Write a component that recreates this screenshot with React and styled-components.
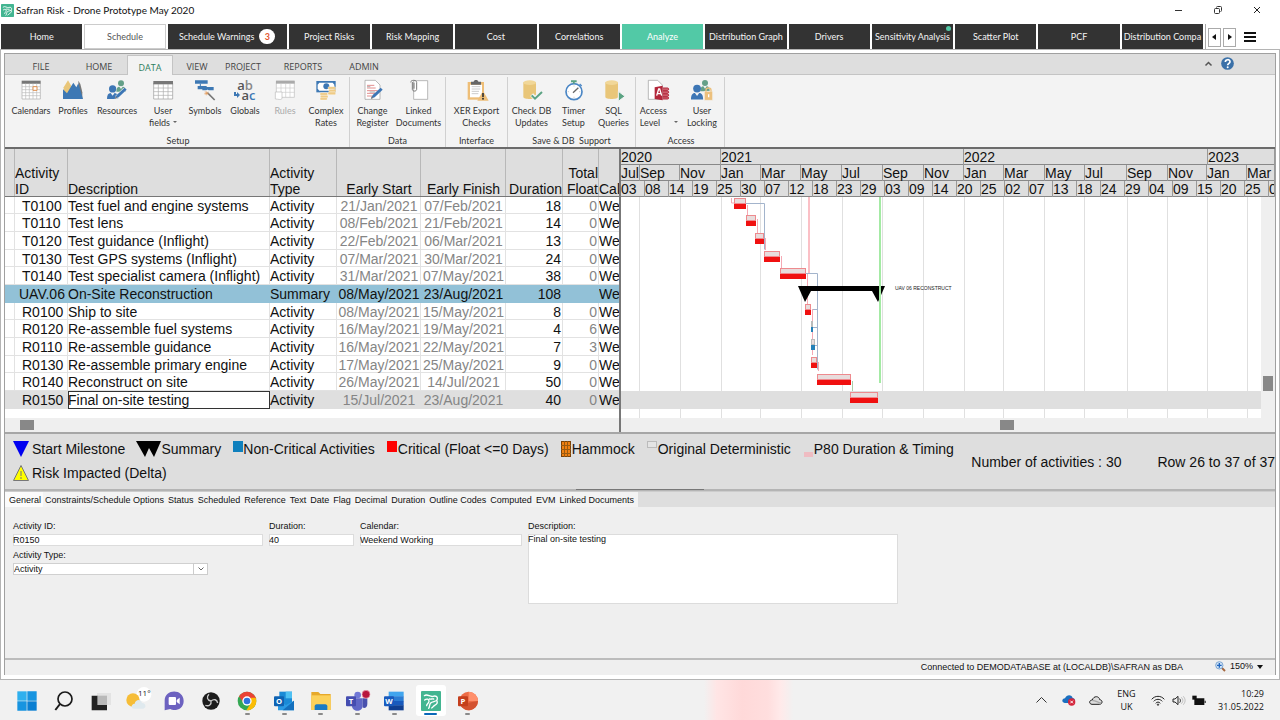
import React from "react";
import styled, { createGlobalStyle, css } from "styled-components";

const UI = `"Open Sans", "Noto Sans", sans-serif`;
const LABEL = `Lato, "Open Sans", sans-serif`;
const ARIAL = `"Liberation Sans", Arial, sans-serif`;

const Global = createGlobalStyle`
  *, *::before, *::after { box-sizing: border-box; }
  body { margin: 0; background: #fff; color: #111; font-family: ${ARIAL}; }
  button, input, select, textarea { font: inherit; color: inherit; margin: 0; padding: 0; border: 0; border-radius: 0; background: none; }
  button { white-space: nowrap; }
  svg { display: block; flex: none; overflow: visible; }
`;

const Screen = styled.div`
  display: flex;
  flex-direction: column;
  min-height: 100vh;
  overflow: hidden;
`;

/* ---------- title bar ---------- */
const TitleBar = styled.header`
  display: flex;
  align-items: center;
  gap: 2px;
  height: 24px;
  padding: 0 16px 4px 1px;
  font-family: ${LABEL};
`;
const Title = styled.h1`
  flex: 1;
  margin: 0;
  font-size: 10px;
  font-weight: 400;
  line-height: 16px;
`;
const WindowButton = styled.button`
  display: grid;
  place-items: center;
  width: 14px;
  height: 16px;
  margin-left: 23px;
`;

/* ---------- module tabs ---------- */
const ModuleBar = styled.nav`
  display: flex;
  height: 25px;
  padding-left: 1px;
  font-family: ${LABEL};
  font-size: 9px;
`;
const ModuleTabs = styled.div`
  display: flex;
  flex: 1;
  gap: 2px;
  min-width: 0;
`;
const tabTone = {
  dark: css`background: #333; color: #f4f4f4;`,
  open: css`background: #fff; color: #555; box-shadow: inset 0 0 0 1px #ccc;`,
  green: css`background: #52c9a6; color: #fff;`,
};
const ModuleTab = styled.button`
  position: relative;
  display: flex;
  align-items: center;
  justify-content: center;
  gap: 5px;
  flex: ${(p) => (p.$wide ? "0 0 119px" : "1 1 0")};
  min-width: 0;
  overflow: hidden;
  ${(p) => tabTone[p.$tone]}
`;
const CountBadge = styled.span`
  width: 16px;
  height: 15px;
  border-radius: 8px;
  background: #fff;
  color: #e4572e;
  font-weight: 700;
  line-height: 15px;
`;
const NewDot = styled.span`
  position: absolute;
  top: 2px;
  right: 2px;
  width: 5px;
  height: 5px;
  border-radius: 50%;
  background: #52c9a6;
`;
const ModuleTools = styled.div`
  display: flex;
  align-items: center;
  gap: 2px;
  width: 75px;
  padding: 1px 0 0 2px;
  margin-left: 2px;
  border-left: 1px solid #aaa;
`;
const ScrollButton = styled.button`
  display: grid;
  place-items: center;
  width: 13px;
  height: 19px;
  border: 1px solid #aaa;
`;
const MenuButton = styled.button`
  margin-left: 6px;
`;

/* ---------- application frame ---------- */
const Frame = styled.main`
  display: flex;
  flex: 1;
  flex-direction: column;
  padding: 3px 3px 4px;
  border: 1px solid #b4b4b4;
`;
const FrameInner = styled.div`
  display: flex;
  flex: 1;
  flex-direction: column;
  min-width: 0;
  border: 1px solid #a0a0a0;
  border-bottom: 0;
  background: #efefef;
`;

/* ---------- ribbon ---------- */
const RibbonTabs = styled.div`
  display: flex;
  align-items: stretch;
  height: 21px;
  padding: 1px 41px 0 6px;
  border-bottom: 1px solid #c4c4c4;
  background: #dedede;
  font-family: ${UI};
  font-size: 9px;
`;
const RibbonTab = styled.button`
  width: ${(p) => p.$w}px;
  padding-top: 4px;
  color: #444;
  ${(p) =>
    p.$active &&
    css`
      margin-bottom: -1px;
      border: 1px solid #c4c4c4;
      border-bottom: 0;
      background: #f3f3f3;
      color: #2d7d5d;
    `}
`;
const RibbonCorner = styled.div`
  display: flex;
  align-items: center;
  gap: 9px;
  margin-left: auto;
  padding-bottom: 2px;
`;
const Ribbon = styled.div`
  display: flex;
  height: 74px;
  border-bottom: 2px solid #6b6b6b;
  background: #f3f3f3;
  color: #333;
  font-family: ${LABEL};
  font-size: 9px;
`;
const RibbonGroup = styled.section`
  display: flex;
  flex-direction: column;
  justify-content: space-between;
  width: ${(p) => p.$w}px;
  margin: 2px 0 0;
  padding-left: ${(p) => p.$pad ?? 0}px;
  border-right: 1px solid #d0d0d0;
`;
const GroupButtons = styled.div`
  display: flex;
  justify-content: center;
`;
const GroupLabel = styled.div`
  line-height: 12px;
  text-align: center;
  white-space: pre;
`;
const Tool = styled.button`
  display: flex;
  flex-direction: column;
  align-items: center;
  gap: 5px;
  width: ${(p) => p.$w}px;
  padding-top: 3px;
  line-height: 12px;
  color: ${(p) => (p.$off ? "#aaa" : "inherit")};
`;
const ToolLabel = styled.span`
  white-space: pre;
  text-align: ${(p) => (p.$left ? "left" : "center")};
`;
const Caret = styled.span`
  display: inline-block;
  margin: 0 0 3px ${(p) => (p.$far ? 14 : 3)}px;
  border: 2px solid transparent;
  border-top-color: #666;
  border-bottom: 0;
`;

/* ---------- activity grid ---------- */
const Workspace = styled.div`
  display: flex;
  height: 285px;
  border-bottom: 2px solid #a6a6a6;
  background: #fff;
`;
const GridPane = styled.div`
  display: flex;
  flex-direction: column;
  width: 616px;
  overflow: hidden;
  border-right: 2px solid #777;
`;
const Grid = styled.table`
  width: 615px;
  table-layout: fixed;
  border-collapse: separate;
  border-spacing: 0;
  font-size: 14px;
  line-height: 16px;
`;
const HeadRow = styled.tr`
  height: 48px;
  background: #dedede;
`;
const Th = styled.th`
  padding: 0 ${(p) => (p.$align === "right" ? 1 : 0)}px 0 0;
  box-shadow: inset 0 -1px #777, inset -1px 0 #b8b8b8;
  font-weight: 400;
  text-align: ${(p) => p.$align};
  vertical-align: bottom;
  white-space: pre;
  overflow: hidden;
`;
const rowTone = { plain: "#fff", summary: "#92c1d7", selected: "#dfdfdf" };
const BodyRow = styled.tr`
  height: 18px;
  background: ${(p) => rowTone[p.$tone]};
  &:nth-child(3n + 1) {
    height: 17px;
  }
`;
const Td = styled.td`
  padding: 0 ${(p) => (p.$align === "right" ? 2 : 0)}px 0 ${(p) => p.$indent ?? 0}px;
  color: ${(p) => (p.$dim ? "#858585" : "#111")};
  text-align: ${(p) => p.$align};
  white-space: nowrap;
  overflow: hidden;
  box-shadow: ${(p) => (p.$tone === "plain" ? "inset -1px -1px #e2e2e2" : "none")};
  ${(p) => p.$focus && css`background: #fff; box-shadow: inset 0 0 0 1px #333;`}
`;
const HScroll = styled.div`
  height: 14px;
  margin-top: auto;
  padding: 2px 0 0 ${(p) => p.$at};
  background: #efefef;
`;
const HThumb = styled.div`
  width: 14px;
  height: 10px;
  background: #888;
`;

/* ---------- time chart ---------- */
const ChartPane = styled.div`
  display: flex;
  flex: 1;
  flex-direction: column;
  min-width: 0;
`;
const ScaleRow = styled.div`
  display: flex;
  height: 16px;
  overflow: hidden;
  background: #dedede;
  box-shadow: inset 0 -1px #888;
  font-size: 14px;
  line-height: 16px;
`;
const ScaleCell = styled.div`
  flex: ${(p) => (p.$w ? `0 0 ${p.$w}px` : "1 0 0")};
  border-right: 1px solid #999;
  overflow: ${(p) => (p.$w ? "visible" : "hidden")};
`;
const ChartBody = styled.div`
  display: flex;
  flex: 1;
  min-height: 0;
`;
const Chart = styled.svg`
  flex: 1;
  min-width: 0;
  height: 100%;
`;
const VScroll = styled.div`
  width: 14px;
  padding: 179px 2px 0;
  background: #efefef;
`;
const VThumb = styled.div`
  height: 15px;
  background: #888;
`;

/* ---------- legend ---------- */
const Legend = styled.section`
  display: flex;
  height: 55px;
  background: #dedede;
  font-size: 14px;
  line-height: 24px;
`;
const LegendItems = styled.ul`
  display: flex;
  flex: 1;
  flex-wrap: wrap;
  align-content: flex-start;
  column-gap: 12px;
  margin: 0;
  padding: 3px 0 0 8px;
  list-style: none;
`;
const LegendItem = styled.li`
  display: flex;
  align-items: center;
  gap: ${(p) => p.$gap}px;
  white-space: nowrap;
`;
const Totals = styled.div`
  display: flex;
  align-items: center;
  gap: 36px;
  white-space: nowrap;
`;
const Splitter = styled.div`
  display: flex;
  justify-content: center;
  height: 3px;
  border-top: 2px solid #b4b4b4;
  background: #ccc;
  &::before {
    content: "";
    width: 128px;
    height: 1px;
    margin-top: -2px;
    background: #777;
  }
`;

/* ---------- detail form ---------- */
const FormTabs = styled.div`
  display: flex;
  height: 15px;
  background: #dedede;
  font-size: 9px;
`;
const FormTab = styled.button`
  padding: 0 2px;
  background: ${(p) => (p.$active ? "#fbfbfb" : "#f3f3f3")};
  &:first-child {
    padding-left: 4px;
  }
  &:last-child {
    padding-right: 4px;
  }
`;
const Form = styled.form`
  display: grid;
  flex: 1;
  grid-template-columns: 250px 85px 162px 370px;
  grid-template-rows: 25px 1fr;
  gap: 4px 6px;
  min-height: 151px;
  padding: 14px 8px 0;
  border-bottom: 2px solid #bcbcbc;
  font-size: 9px;
  line-height: 11px;
`;
const Field = styled.div`
  display: flex;
  flex-direction: column;
  gap: 2px;
  ${(p) => p.$tall && css`grid-row: span 2;`}
`;
const TextInput = styled.input`
  height: 12px;
  box-shadow: inset 0 0 0 1px #dcdcdc;
  background: #fff;
`;
const TextArea = styled.textarea`
  height: 70px;
  box-shadow: inset 0 0 0 1px #dcdcdc;
  background: #fff;
  resize: none;
`;
const SelectWrap = styled.div`
  position: relative;
  width: 195px;
`;
const Select = styled.select`
  display: block;
  width: 100%;
  height: 12px;
  border: 1px solid #d0d0d0;
  background: #fff;
  appearance: none;
`;
const SelectArrow = styled.span`
  position: absolute;
  top: 0;
  right: 0;
  display: grid;
  place-items: center;
  width: 15px;
  height: 12px;
  border: 1px solid #ccc;
  pointer-events: none;
`;

/* ---------- status bar ---------- */
const StatusBar = styled.footer`
  display: flex;
  align-items: center;
  justify-content: flex-end;
  height: 15px;
  padding-right: 12px;
  font-size: 9px;
  line-height: 15px;
`;
const Zoom = styled.button`
  display: flex;
  align-items: center;
  gap: 4px;
  height: 13px;
  margin-left: 32px;
  padding-bottom: 2px;
`;

/* ---------- taskbar ---------- */
const Taskbar = styled.nav`
  display: flex;
  justify-content: space-between;
  height: 40px;
  padding: 0 16px 0 9px;
  background: linear-gradient(90deg, transparent 55%, #ffe5e5 56%, #ffd9d9 58%, #ffdede 60%, #ffeaea 61%, transparent 62%) #f1f1f1;
  font-family: ${UI};
`;
const Apps = styled.div`
  display: grid;
  grid-template-columns: repeat(13, 1fr);
  width: 477px;
`;
const AppButton = styled.button`
  position: relative;
  display: grid;
  place-items: center;
  height: 31px;
  margin: 5px 3px 0;
  border-radius: 3px;
  background: ${(p) => (p.$active ? "#fff" : "none")};
  &::after {
    content: "";
    position: absolute;
    bottom: 1px;
    width: ${(p) => (p.$active ? 13 : 5)}px;
    height: 2px;
    border-radius: 1px;
    background: ${(p) => (p.$active ? "#0a67b8" : p.$running ? "#8a8a8a" : "none")};
  }
`;
const Tray = styled.div`
  display: flex;
  align-items: center;
  font-size: 9px;
  line-height: 13px;
`;
const TrayButton = styled.button`
  display: grid;
  place-items: center;
  width: ${(p) => p.$w}px;
  height: 30px;
  white-space: pre;
`;
const Clock = styled.time`
  width: 52px;
  text-align: right;
  white-space: nowrap;
`;

/* ---------- icons ---------- */
const SafranMark = ({ size }) => (
  <svg width={size} height={size} viewBox="0 0 60 60">
    <rect width="60" height="60" rx="3" fill="#43b591" />
    <g fill="none" stroke="#fff" strokeWidth="4" strokeLinecap="round" strokeLinejoin="round">
      <path d="M10 14c9-7 17 5 26 2 8-3 14 1 13 8-1 9-14 6-20 12-5 5-2 12-6 16" />
      <path d="M11 27c6-5 13-3 13 4 0 6-7 7-7 13" />
      <path d="M32 51c4-2 5-6 9-8 6-3 9-8 7-13" />
      <path d="M25 24c5 1 9-1 13 0" />
    </g>
  </svg>
);

const Ico = ({ children }) => (
  <svg width="20" height="20" viewBox="0 0 60 60">
    {children}
  </svg>
);
const Doc = ({ x = 4, w = 44 }) => (
  <path d={`M${x} 1h${w - 14}l14 14v43h-${w}z`} fill="#fff" stroke="#999" strokeWidth="2" />
);
const Pen = ({ color = "#3d76b5" }) => (
  <g>
    <path d="M24 56l5-11 24-22 6 6-24 23z" fill={color} />
    <path d="M24 56l2-7 5 5z" fill="#777" />
  </g>
);
const Person = ({ x, y, color, s = 1 }) => (
  <g transform={`translate(${x} ${y}) scale(${s})`} fill={color}>
    <circle cx="14" cy="9" r="9" />
    <path d="M0 34c0-10 3-15 9-15l5 7 5-7c6 0 9 5 9 15z" />
  </g>
);
const Db = () => (
  <g>
    <path d="M4 7v44c0 8 38 8 38 0V7z" fill="#e9c679" />
    <ellipse cx="23" cy="8" rx="19" ry="7" fill="#f1d798" />
  </g>
);

const icons = {
  calendars: (
    <Ico>
      <path d="M3 10h55v47H3z" fill="#fff" stroke="#aaa" strokeWidth="2" />
      <path d="M2 2h57v9H2z" fill="#777" />
      <path d="M14 11v46M25 11v46M36 11v46M47 11v46M3 20h55M3 29h55M3 38h55M3 47h55" stroke="#bbb" strokeWidth="2" />
      <path d="M36 20h12v11H36z" fill="#fff" stroke="#e0904f" strokeWidth="3" />
    </Ico>
  ),
  profiles: (
    <Ico>
      <path d="M2 22L15 1l14 24-6 22H2z" fill="#e9c679" />
      <path d="M46 2l6 10 6 25v20H48z" fill="#777" />
      <path d="M0 28l12 12L31 8l9 14 6-12 14 47H0z" fill="#3d78b4" />
    </Ico>
  ),
  resources: (
    <Ico>
      <Person x={28} y={1} color="#64a088" />
      <Person x={0} y={16} color="#3d76b5" s={1.2} />
      <path d="M22 60l5-14 22-22 10 6-22 24z" fill="#f3f3f3" />
      <Pen />
    </Ico>
  ),
  fields: (
    <Ico>
      <path d="M2 10h57v47H2z" fill="#fff" stroke="#999" strokeWidth="2" />
      <path d="M1 3h59v10H1z" fill="#777" />
      <path d="M16 12v45M31 12v45M45 12v45M2 24h57M2 35h57M2 46h57" stroke="#aaa" strokeWidth="2" />
    </Ico>
  ),
  symbols: (
    <Ico>
      <path d="M0 1h38v10H0zM8 18h27v10H8zM22 21h34v10H22z" fill="#3d78b4" />
      <path d="M16 11v8" stroke="#3d78b4" strokeWidth="3" />
      <path d="M34 32l28 28" stroke="#f3f3f3" strokeWidth="10" />
      <path d="M37 38l22 22" stroke="#777" strokeWidth="5" />
      <path d="M34 34v12M28 40h13M30 34l9 10M39 35l-9 9" stroke="#e69b5a" strokeWidth="2" />
    </Ico>
  ),
  rules: (
    <Ico>
      <path d="M4 4h54v48H4z" fill="#fff" stroke="#bbb" strokeWidth="2" />
      <path d="M3 2h56v9H3z" fill="#aaa" />
      <path d="M18 12v40M32 12v40M45 12v40M4 24h54M4 37h54" stroke="#ccc" strokeWidth="2" />
      <path d="M1 36h20v20c-5 5-11 1-20 1z" fill="#fff" stroke="#bbb" strokeWidth="2" />
    </Ico>
  ),
  rates: (
    <Ico>
      <path d="M1 3h58v34H1z" fill="#3d78b4" />
      <path d="M10 8h40l5 6v12l-5 6H10l-5-6V14z" fill="#fff" />
      <circle cx="31" cy="19" r="9" fill="#3d78b4" />
      <g fill="#efcb85" stroke="#fff" strokeWidth="1">
        <rect x="36" y="20" width="23" height="8" rx="3" />
        <rect x="38" y="28" width="22" height="8" rx="3" />
        <rect x="12" y="38" width="23" height="8" rx="3" />
        <rect x="36" y="36" width="23" height="8" rx="3" />
        <rect x="13" y="46" width="23" height="8" rx="3" />
        <rect x="12" y="53" width="22" height="7" rx="3" />
      </g>
    </Ico>
  ),
  change: (
    <Ico>
      <Doc x={6} w={45} />
      <path d="M12 16h22M12 24h26M12 32h32M12 40h24M12 48h16" stroke="#e28f8f" strokeWidth="3" />
      <path d="M12 20h10M20 36h16" stroke="#888" strokeWidth="2" />
      <Pen />
    </Ico>
  ),
  linked: (
    <Ico>
      <path d="M14 2h42v56H14z" fill="#fff" stroke="#999" strokeWidth="2" />
      <path d="M10 6v22c0 7 13 7 13 0V7c0-8-18-8-18 0" fill="none" stroke="#777" strokeWidth="3" />
      <path d="M15 8v18" stroke="#777" strokeWidth="3" />
    </Ico>
  ),
  xer: (
    <Ico>
      <path d="M2 6h49v53H2z" fill="#eebe77" />
      <path d="M9 14h36v38H9z" fill="#fff" />
      <path d="M14 20h26M14 27h26M14 34h22M14 41h20" stroke="#ccc" strokeWidth="3" />
      <path d="M12 14V5h8c0-7 14-7 14 0h8v9z" fill="#666" />
      <path d="M48 32l17 30H31z" fill="#eebe77" />
      <path d="M48 39v12" stroke="#333" strokeWidth="5" />
      <circle cx="48" cy="56" r="3" fill="#333" />
    </Ico>
  ),
  check: (
    <Ico>
      <Db />
      <path d="M29 44l10 11 22-20" fill="none" stroke="#f3f3f3" strokeWidth="12" />
      <path d="M29 46l10 10 21-20" fill="none" stroke="#5ba383" strokeWidth="6" />
    </Ico>
  ),
  timer: (
    <Ico>
      <circle cx="30" cy="35" r="24" fill="#fff" stroke="#4a86c5" strokeWidth="5" />
      <path d="M21 1h17v6h-6v4h-5V7h-6z" fill="#5ba383" />
      <path d="M47 12l6 6" stroke="#4a86c5" strokeWidth="4" />
      <path d="M27 38l16-15" stroke="#666" strokeWidth="4" />
      <path d="M30 16v4M30 50v4M11 35h4M45 35h4" stroke="#bbb" strokeWidth="2" />
    </Ico>
  ),
  sql: (
    <Ico>
      <Db />
      <path d="M43 34l20 15-20 15z" fill="#5ba383" stroke="#f3f3f3" strokeWidth="3" />
    </Ico>
  ),
  access: (
    <svg width="22" height="20" viewBox="0 0 66 60">
      <Doc x={1} w={42} />
      <path d="M20 22l24-5v44l-24-4z" fill="#b3263a" />
      <path d="M26 47l6-20h3l6 20M29 41h9" fill="none" stroke="#fff" strokeWidth="4" />
      <path d="M45 24h14c4 0 4 7 0 7H45M45 33h14c4 0 4 7 0 7H45M45 42h14c4 0 4 7 0 7H45M45 51h14c4 0 4 6 0 6H45" fill="#d26a76" stroke="#b3263a" strokeWidth="3" />
    </svg>
  ),
  locking: (
    <svg width="22" height="20" viewBox="0 0 66 60">
      <Person x={28} y={0} color="#64a088" />
      <Person x={0} y={14} color="#3d76b5" s={1.3} />
      <path d="M40 34h25v27H40z" fill="#ecc07d" stroke="#f3f3f3" strokeWidth="2" />
      <path d="M45 35v-5c0-8 15-8 15 0v5" fill="none" stroke="#ecc07d" strokeWidth="4" />
      <path d="M53 43v9" stroke="#fff" strokeWidth="4" />
    </svg>
  ),
};

const GlobalsIcon = styled.span`
  display: flex;
  flex-direction: column;
  height: 20px;
  color: #555;
  font-family: ${UI};
  font-size: 13px;
  font-weight: 600;
  line-height: 10px;
  b { color: #3d78b4; font-weight: 600; }
  i { color: #888; font-style: normal; }
`;
const SecondLine = styled.span`
  display: flex;
  align-items: center;
  gap: 1px;
`;

const Tri = ({ dir }) => (
  <svg width="5" height="6" viewBox="0 0 5 6">
    <path d={dir === "left" ? "M4 0v6L0 3z" : "M1 0v6l4-3z"} fill="#111" />
  </svg>
);

const officeTile = (letter, dark) => (
  <g>
    <rect x="0" y="16" width="30" height="30" rx="3" fill={dark} />
    <text x="15" y="39" fontSize="23" fontWeight="700" fill="#fff" textAnchor="middle" fontFamily="Open Sans">{letter}</text>
  </g>
);
const A = ({ children, w = 20, vb = "0 0 60 60" }) => (
  <svg width={w} height="20" viewBox={vb}>{children}</svg>
);
const apps = [
  ["Start", 0, <A><g fill="#1794e0"><path d="M1 1h28v28H1z" fill="#2fb0ee" /><path d="M31 1h28v28H31zM1 31h28v28H1z" /><path d="M31 31h28v28H31z" fill="#0a7fd2" /></g></A>],
  ["Search", 0, <A><circle cx="33" cy="24" r="21" fill="none" stroke="#1a1a1a" strokeWidth="5" /><path d="M18 39L4 57" stroke="#1a1a1a" strokeWidth="6" /></A>],
  ["Task view", 0, <A><path d="M18 6h42v36H18z" fill="#e3e3e3" /><path d="M2 14h18v28h28v16H2z" fill="#222" /><path d="M20 14h28v28H20z" fill="#b9b9b9" /></A>],
  ["Weather", 0, <A w={28} vb="0 0 84 60"><circle cx="63" cy="10" r="22" fill="#fff" /><circle cx="30" cy="27" r="20" fill="#f6bd37" /><path d="M34 53c-10 0-11-14 1-15 3-14 19-14 22-2 13-1 14 17 2 17z" fill="#dfe9ee" /><text x="64" y="16" fontSize="24" textAnchor="middle" fill="#222" fontFamily="Open Sans">11°</text></A>],
  ["Chat", 0, <A><path d="M2 58V28C3-8 59-8 59 30c0 26-28 32-40 24z" fill="#6d62c0" /><rect x="14" y="18" width="22" height="24" rx="3" fill="#fff" /><path d="M38 27l9-7v20l-9-7z" fill="#fff" /></A>],
  ["OBS", 0, <A><circle cx="30" cy="30" r="26" fill="#1c1c1c" /><path d="M30 30c-12-2-14-12-6-20M30 30c9-8 18-4 20 6M30 30c2 11-6 17-17 13" fill="none" stroke="#c9c9c9" strokeWidth="4" /></A>],
  ["Chrome", 1, <A><circle cx="30" cy="30" r="28" fill="#34a853" /><path d="M6 16A28 28 0 0 1 54 16L58 24H30L19 35z" fill="#ea4335" /><path d="M56 20A28 28 0 0 1 28 58L42 35V20z" fill="#fbbc05" /><circle cx="30" cy="30" r="14" fill="#fff" /><circle cx="30" cy="30" r="10" fill="#2f73dd" /></A>],
  ["Outlook", 1, <A><path d="M16 2h38v40H16z" fill="#1a8ad6" /><path d="M35 2h19v20H35z" fill="#4ec0f2" /><path d="M12 30l24 12 24-13v29H12z" fill="#2b9be5" /><path d="M60 29v29H26z" fill="#1470bd" />{officeTile("O", "#0f63b3")}</A>],
  ["Explorer", 1, <A><path d="M1 3h21l6 6h31v48H1z" fill="#e7a92a" /><path d="M1 13h58v44H1z" fill="#fcd15a" /><path d="M11 57V46c0-4 3-6 6-6h26c4 0 6 3 6 6v11z" fill="#1b7bc4" /></A>],
  ["Teams", 1, <A w={24} vb="0 0 72 60"><circle cx="35" cy="12" r="10" fill="#7178d6" /><path d="M18 22h32v22c0 20-32 20-32 0z" fill="#6067c6" /><path d="M50 22h14v17c0 12-10 14-14 10z" fill="#4951ad" />{officeTile("T", "#454db0")}<circle cx="60" cy="10" r="12" fill="#b8163d" stroke="#eea4b5" strokeWidth="2" /></A>],
  ["Word", 1, <A><path d="M14 2h45v15H14z" fill="#41a5ee" /><path d="M14 16h45v15H14z" fill="#2b7cd3" /><path d="M14 30h45v14H14z" fill="#185abd" /><path d="M14 43h45v15H14z" fill="#103f91" />{officeTile("W", "#185abd")}</A>],
  ["Safran Risk", 2, <SafranMark size={20} />],
  ["PowerPoint", 1, <A><circle cx="32" cy="30" r="28" fill="#ed6c47" /><path d="M32 2a28 28 0 0 1 28 28H32z" fill="#ff8f6b" /><path d="M60 30a28 28 0 0 1-54 10z" fill="#d35230" />{officeTile("P", "#c43e1c")}</A>],
];

/* ---------- data ---------- */
const modules = [
  ["Home", "dark"], ["Schedule", "open"], ["Schedule Warnings", "dark", "3"], ["Project Risks", "dark"],
  ["Risk Mapping", "dark"], ["Cost", "dark"], ["Correlations", "dark"], ["Analyze", "green"],
  ["Distribution Graph", "dark"], ["Drivers", "dark"], ["Sensitivity Analysis", "dark", "dot"],
  ["Scatter Plot", "dark"], ["PCF", "dark"], ["Distribution Compa", "dark"],
];
const ribbonTabs = [["FILE", 60], ["HOME", 56], ["DATA", 46], ["VIEW", 48], ["PROJECT", 44], ["REPORTS", 76], ["ADMIN", 46]];
const groups = [
  ["Setup", 345, [
    ["calendars", 44, "Calendars"], ["profiles", 40, "Profiles"], ["resources", 48, "Resources"],
    ["fields", 44, "User", "fields"], ["symbols", 40, "Symbols"], ["globals", 40, "Globals"],
    ["rules", 40, "Rules"], ["rates", 42, "Complex", "Rates"],
  ], 2],
  ["Data", 96, [["change", 42, "Change", "Register"], ["linked", 50, "Linked", "Documents"]]],
  ["Interface", 62, [["xer", 50, "XER Export", "Checks"]]],
  ["Save & DB  Support", 128, [["check", 42, "Check DB", "Updates"], ["timer", 42, "Timer", "Setup"], ["sql", 38, "SQL", "Queries"]]],
  ["Access", 89, [["access", 42, "Access", "Level"], ["locking", 44, "User", "Locking"]], 2],
];
const columns = [
  [10, "", "left"], [53, "Activity\nID", "left"], [202, "Description", "left"], [67, "Activity\nType", "left"],
  [84, "Early Start", "center"], [85, "Early Finish", "center"], [57, "Duration", "right"],
  [36, "Total\nFloat", "right"], [21, "Cal", "left"],
];
const rows = [
  ["T0100", "Test fuel and engine systems", "21/Jan/2021", "07/Feb/2021", 18, 0],
  ["T0110", "Test lens", "08/Feb/2021", "21/Feb/2021", 14, 0],
  ["T0120", "Test guidance (Inflight)", "22/Feb/2021", "06/Mar/2021", 13, 0],
  ["T0130", "Test GPS systems (Inflight)", "07/Mar/2021", "30/Mar/2021", 24, 0],
  ["T0140", "Test specialist camera (Inflight)", "31/Mar/2021", "07/May/2021", 38, 0],
  ["UAV.06", "On-Site Reconstruction", "08/May/2021", "23/Aug/2021", 108, ""],
  ["R0100", "Ship to site", "08/May/2021", "15/May/2021", 8, 0],
  ["R0120", "Re-assemble fuel systems", "16/May/2021", "19/May/2021", 4, 6],
  ["R0110", "Re-assemble guidance", "16/May/2021", "22/May/2021", 7, 3],
  ["R0130", "Re-assemble primary engine", "17/May/2021", "25/May/2021", 9, 0],
  ["R0140", "Reconstruct on site", "26/May/2021", "14/Jul/2021", 50, 0],
  ["R0150", "Final on-site testing", "15/Jul/2021", "23/Aug/2021", 40, 0],
];
const years = [[100, "2020"], [243, "2021"], [244, "2022"], [0, "2023"]];
const months = [
  [19, "Jul"], [40, "Sep"], [41, "Nov"], [40, "Jan"], [40, "Mar"], [41, "May"], [41, "Jul"], [41, "Sep"], [40, "Nov"],
  [40, "Jan"], [41, "Mar"], [40, "May"], [42, "Jul"], [41, "Sep"], [39, "Nov"], [40, "Jan"], [0, "Mar"],
];
const days = "03 08 14 19 25 30 07 12 18 23 29 03 09 14 20 25 02 07 13 18 24 29 04 09 15 20 25".split(" ");

/* bar: row, start, end, colour */
const bars = [
  [0, 113, 125], [1, 125, 135], [2, 134, 143], [3, 143, 159], [4, 159, 185],
  [6, 184, 190], [7, 190, 192, "#2480b8"], [8, 190, 194, "#2480b8"], [9, 190, 196], [10, 196, 230], [11, 229, 257],
];
const gridLines = [18, 59, 100, 139, 180, 221, 261, 302, 343, 382, 423, 463, 506, 546, 586, 626];
const rowTop = (i) => i * 18 - Math.floor((i + 2) / 3);

function Gantt() {
  return (
    <Chart role="img" aria-label="Activity bars">
      {gridLines.map((x) => <path key={x} d={`M${x + 0.5} 0v222`} stroke="#e0e0e0" />)}
      <rect x="0" y={rowTop(11)} width="100%" height="18" fill="#dfdfdf" />
      <path d="M125 6.500h18.500v46M185 76.500h11.500v96M191 112.500h5M192 130.500h4M194 148.500h2" fill="none" stroke="#a3b4cc" />
      <g fill="none" stroke="#f5a9b4">
        <path d="M126.500 8v10M136.500 22v14M144.500 41v12M160.500 59v12M186.500 77v30M191.500 112v46M197.500 165v9" />
        <path d="M110.500 1v5h3" />
      </g>
      <path d="M187 0h2v76h-2z" fill="#fbc0c6" />
      <path d="M231.500 184v10" stroke="#a8cfa8" />
      {bars.map(([i, x1, x2, c = "#f01010"]) => (
        <g key={i}>
          <rect x={x1 + 0.5} y={rowTop(i) + 1.5} width={x2 - x1 - 1} height="5" fill="#e8dcdc" stroke={c === "#f01010" ? "#ee8a8e" : "#bbb"} />
          <rect x={x1} y={rowTop(i) + 7} width={x2 - x1} height="5" fill={c} />
        </g>
      ))}
      <path d="M177 89h87l-7 16-6-11h-61l-6 11z" fill="#000" />
      <path d="M258 0h2v186h-2z" fill="#a4eaa4" />
      <text x="274" y="93" fontSize="5" fill="#222">UAV 06 RECONSTRUCT</text>
    </Chart>
  );
}

const legend = [
  ["Start Milestone", 3, <svg width="16" height="16"><path d="M0 0h16L8 16z" fill="#0000f0" /></svg>],
  ["Summary", 0, <svg width="24" height="16"><path d="M-1 0h25l-7 16-5-9-4 9z" fill="#000" /></svg>],
  ["Non-Critical Activities", 0, <svg width="10" height="16"><path d="M0 0h10v11H0z" fill="#0f80bd" /></svg>],
  ["Critical (Float <=0 Days)", 1, <svg width="10" height="16"><path d="M0 0h10v11H0z" fill="#f00" /></svg>],
  ["Hammock", 1, <svg width="10" height="16"><rect x=".5" y=".5" width="9" height="15" fill="#f08010" stroke="#7a4208" /><path d="M3.500 0v16M6.500 0v16M0 4.500h10M0 8.500h10M0 12.500h10" stroke="#9a5a10" /></svg>],
  ["Original Deterministic", 1, <svg width="10" height="16"><rect x=".5" y=".5" width="9" height="6" fill="#e4e4e4" stroke="#bbb" /></svg>],
  ["P80 Duration & Timing", 1, <svg width="10" height="16"><path d="M1 11h9v5H1z" fill="#efbcc2" /></svg>],
  ["Risk Impacted (Delta)", 3, <svg width="16" height="16"><path d="M8 .5L15.500 15.500H.5z" fill="#ff0" stroke="#777" /><path d="M8 6v5M8 12v2" stroke="#777" /></svg>],
];
const formTabs = ["General", "Constraints/Schedule Options", "Status", "Scheduled", "Reference", "Text", "Date", "Flag", "Decimal", "Duration", "Outline Codes", "Computed", "EVM", "Linked Documents"];

function ToolButton({ icon, width, first, second }) {
  const caret = icon === "fields" || icon === "access";
  return (
    <Tool $w={width} $off={icon === "rules"}>
      {icon === "globals" ? (
        <GlobalsIcon aria-hidden="true">
          <span>a<i>b</i></span>
          <SecondLine>
            <svg width="6" height="6"><path d="M1 0v3h3" fill="none" stroke="#3d78b4" strokeWidth="2" /><path d="M3 0l3 3-3 3z" fill="#3d78b4" /></svg>
            <span>a<b>c</b></span>
          </SecondLine>
        </GlobalsIcon>
      ) : icons[icon]}
      <ToolLabel $left={icon === "access"}>
        {first}
        {second && "\n" + second}
        {caret && <Caret $far={icon === "access"} />}
      </ToolLabel>
    </Tool>
  );
}

export default function App() {
  return (
    <Screen>
      <Global />
      <TitleBar>
        <SafranMark size={13} />
        <Title>Safran Risk - Drone Prototype May 2020</Title>
        <WindowButton aria-label="Minimize"><svg width="8" height="8"><path d="M0 4.500h7" stroke="#333" /></svg></WindowButton>
        <WindowButton aria-label="Restore"><svg width="8" height="8" fill="none" stroke="#333"><rect x=".5" y="2.500" width="5" height="5" rx="1" /><path d="M2.500 1.500q0-1 1-1h3q1 0 1 1v3q0 1-1 1" /></svg></WindowButton>
        <WindowButton aria-label="Close"><svg width="8" height="8"><path d="M1 1l6 6M7 1L1 7" stroke="#222" /></svg></WindowButton>
      </TitleBar>

      <ModuleBar>
        <ModuleTabs>
          {modules.map(([name, tone, extra]) => (
            <ModuleTab key={name} $tone={tone} $wide={extra === "3"}>
              {name}
              {extra === "3" && <CountBadge>3</CountBadge>}
              {extra === "dot" && <NewDot />}
            </ModuleTab>
          ))}
        </ModuleTabs>
        <ModuleTools>
          <ScrollButton aria-label="Scroll left"><Tri dir="left" /></ScrollButton>
          <ScrollButton aria-label="Scroll right"><Tri dir="right" /></ScrollButton>
          <MenuButton aria-label="Menu"><svg width="12" height="10"><path d="M0 1h12M0 5h12M0 9h12" stroke="#111" strokeWidth="2" /></svg></MenuButton>
        </ModuleTools>
      </ModuleBar>

      <Frame>
        <FrameInner>
          <RibbonTabs>
            {ribbonTabs.map(([name, w]) => (
              <RibbonTab key={name} $w={w} $active={name === "DATA"}>{name}</RibbonTab>
            ))}
            <RibbonCorner>
              <button aria-label="Collapse ribbon"><svg width="7" height="5"><path d="M.5 4.500l3-3 3 3" fill="none" stroke="#555" strokeWidth="1.500" /></svg></button>
              <button aria-label="Help">
                <svg width="13" height="13" viewBox="0 0 39 39"><circle cx="19.500" cy="19.500" r="19" fill="#3a70a8" /><path d="M13 15c0-9 14-9 14-1 0 5-7 5-7 11" fill="none" stroke="#fff" strokeWidth="5" /><circle cx="20" cy="31" r="3" fill="#fff" /></svg>
              </button>
            </RibbonCorner>
          </RibbonTabs>
          <Ribbon>
            {groups.map(([name, w, tools, pad]) => (
              <RibbonGroup key={name} $w={w} $pad={pad}>
                <GroupButtons>
                  {tools.map(([icon, tw, first, second]) => (
                    <ToolButton key={icon} icon={icon} width={tw} first={first} second={second} />
                  ))}
                </GroupButtons>
                <GroupLabel>{name}</GroupLabel>
              </RibbonGroup>
            ))}
          </Ribbon>

          <Workspace>
            <GridPane>
              <Grid>
                <colgroup>{columns.map(([w], i) => <col key={i} width={w} />)}</colgroup>
                <thead>
                  <HeadRow>{columns.map(([, name, align], i) => <Th key={i} $align={align}>{name}</Th>)}</HeadRow>
                </thead>
                <tbody>
                  {rows.map(([id, desc, start, finish, dur, fl]) => {
                    const summary = id === "UAV.06";
                    const selected = id === "R0150";
                    const tone = summary ? "summary" : selected ? "selected" : "plain";
                    return (
                      <BodyRow key={id} $tone={tone}>
                        <Td $tone={tone} />
                        <Td $tone={tone} $indent={summary ? 4 : 7}>{id}</Td>
                        <Td $tone={tone} $focus={selected}>{desc}</Td>
                        <Td $tone={tone}>{summary ? "Summary" : "Activity"}</Td>
                        <Td $tone={tone} $align="center" $dim={!summary}>{start}</Td>
                        <Td $tone={tone} $align="center" $dim={!summary}>{finish}</Td>
                        <Td $tone={tone} $align="right">{dur}</Td>
                        <Td $tone={tone} $align="right" $dim>{fl}</Td>
                        <Td $tone={tone}>We</Td>
                      </BodyRow>
                    );
                  })}
                </tbody>
              </Grid>
              <HScroll $at="15px"><HThumb /></HScroll>
            </GridPane>
            <ChartPane>
              <ScaleRow>{years.map(([w, t]) => <ScaleCell key={t} $w={w}>{t}</ScaleCell>)}</ScaleRow>
              <ScaleRow>{months.map(([w, t], i) => <ScaleCell key={i} $w={w}>{t}</ScaleCell>)}</ScaleRow>
              <ScaleRow>
                {days.map((t, i) => <ScaleCell key={i} $w={24}>{t}</ScaleCell>)}
                <ScaleCell>0</ScaleCell>
              </ScaleRow>
              <ChartBody>
                <Gantt />
                <VScroll><VThumb /></VScroll>
              </ChartBody>
              <HScroll $at="58%"><HThumb /></HScroll>
            </ChartPane>
          </Workspace>

          <Legend>
            <LegendItems>
              {legend.map(([name, gap, mark]) => (
                <LegendItem key={name} $gap={gap}>{mark}{name}</LegendItem>
              ))}
            </LegendItems>
            <Totals><span>Number of activities : 30</span><span>Row 26 to 37 of 37</span></Totals>
          </Legend>
          <Splitter />

          <FormTabs>
            {formTabs.map((t) => <FormTab key={t} $active={t === "General"}>{t}</FormTab>)}
          </FormTabs>
          <Form>
            <Field><label htmlFor="aid">Activity ID:</label><TextInput id="aid" defaultValue="R0150" /></Field>
            <Field><label htmlFor="dur">Duration:</label><TextInput id="dur" defaultValue="40" /></Field>
            <Field><label htmlFor="cal">Calendar:</label><TextInput id="cal" defaultValue="Weekend Working" /></Field>
            <Field $tall><label htmlFor="desc">Description:</label><TextArea id="desc" defaultValue="Final on-site testing" /></Field>
            <Field>
              <label htmlFor="atype">Activity Type:</label>
              <SelectWrap>
                <Select id="atype" defaultValue="Activity"><option>Activity</option><option>Summary</option></Select>
                <SelectArrow><svg width="6" height="4"><path d="M.5.5L3 3 5.500.5" fill="none" stroke="#666" /></svg></SelectArrow>
              </SelectWrap>
            </Field>
          </Form>
          <StatusBar>
            <span>Connected to DEMODATABASE at (LOCALDB)\SAFRAN as DBA</span>
            <Zoom>
              <svg width="11" height="11" viewBox="0 0 33 33"><path d="M19 19l11 11" stroke="#a5673f" strokeWidth="6" /><circle cx="13" cy="13" r="11" fill="#cfe2f6" stroke="#7ea6d0" strokeWidth="3" /><path d="M13 6v14M6 13h14" stroke="#1f66c0" strokeWidth="4" /></svg>
              150%
              <svg width="6" height="4"><path d="M0 0h6L3 4z" fill="#111" /></svg>
            </Zoom>
          </StatusBar>
        </FrameInner>
      </Frame>

      <Taskbar>
        <Apps>
          {apps.map(([name, state, icon]) => (
            <AppButton key={name} aria-label={name} $running={state === 1} $active={state === 2}>{icon}</AppButton>
          ))}
        </Apps>
        <Tray>
          <TrayButton $w={27} aria-label="Hidden icons"><svg width="11" height="6"><path d="M.5 5.500l5-5 5 5" fill="none" stroke="#333" /></svg></TrayButton>
          <TrayButton $w={27} aria-label="OneDrive">
            <svg width="14" height="12" viewBox="0 0 42 36"><path d="M8 27C-2 26-1 13 9 13 14-1 31 2 32 12c9 1 9 14 0 15z" fill="#1b6fc0" /><circle cx="29" cy="24" r="11" fill="#d4263c" /><path d="M25 20l8 8M33 20l-8 8" stroke="#fff" strokeWidth="3" /></svg>
          </TrayButton>
          <TrayButton $w={27} aria-label="Cloud">
            <svg width="14" height="11" viewBox="0 0 42 33"><path d="M9 28C-1 27 0 15 10 15 14 1 31 3 32 14c10 1 9 13 0 14z" fill="#ddd" stroke="#222" strokeWidth="3" /><path d="M10 17c8-2 16 6 26 7" fill="none" stroke="#aaa" strokeWidth="4" /></svg>
          </TrayButton>
          <TrayButton $w={35}>{"ENG\nUK"}</TrayButton>
          <TrayButton $w={28} aria-label="Wi-Fi">
            <svg width="14" height="11" viewBox="0 0 42 33" fill="none" stroke="#222" strokeWidth="3"><path d="M2 13C12 1 30 1 40 13M8 19c7-8 19-8 26 0M14 25c4-5 10-5 14 0" /><circle cx="21" cy="29" r="2" /></svg>
          </TrayButton>
          <TrayButton $w={14} aria-label="Volume">
            <svg width="14" height="11" viewBox="0 0 42 33" fill="none" stroke="#222" strokeWidth="3"><path d="M3 12h6l9-8v25l-9-8H3z" /><path d="M23 11c3 4 3 8 0 12" /><path d="M28 7c6 7 6 13 0 19M34 4c7 9 7 16 0 25" stroke="#bbb" /></svg>
          </TrayButton>
          <TrayButton $w={26} aria-label="Battery">
            <svg width="14" height="11" viewBox="0 0 42 33"><path d="M9 12h26v16H9z" fill="#111" stroke="#111" strokeWidth="4" /><path d="M38 17h3v7h-3z" fill="#111" /><path d="M1 2h13v12H1z" fill="#111" /></svg>
          </TrayButton>
          <Clock>10:29<br />31.05.2022</Clock>
        </Tray>
      </Taskbar>
    </Screen>
  );
}
